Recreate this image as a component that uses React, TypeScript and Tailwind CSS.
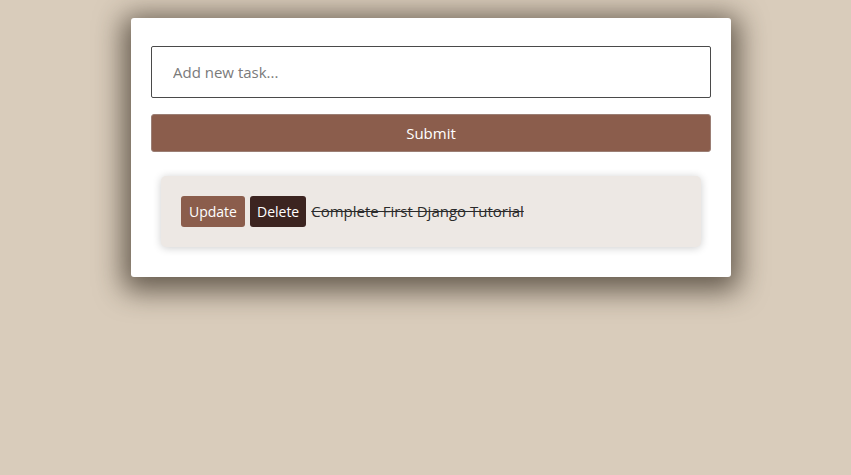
export default function App() {
  return (
    <div className="min-h-[475px] w-full bg-[#d9ccbb] pt-[18px] font-['Open_Sans',sans-serif]">
      <div className="ml-[131px] w-[600px] rounded-[3px] bg-white px-5 pb-[30px] pt-7 shadow-[0_6px_28px_8px_rgba(40,30,20,0.65)]">
        {/* Form */}
        <form className="flex flex-col gap-4" onSubmit={(e) => e.preventDefault()}>
          <input
            type="text"
            placeholder="Add new task..."
            className="h-[52px] w-full rounded-[2px] border border-[#4a4a4a] px-[21px] text-[15px] text-[#333] outline-none placeholder:text-[#7a7a7a]"
          />
          <button
            type="submit"
            className="h-[38px] w-full rounded-[3px] border border-[#9b7e74] bg-[#8b5d4c] text-[15px] text-white"
          >
            Submit
          </button>
        </form>

        {/* Tasks */}
        <div className="mt-6 px-[10px]">
          <div className="flex items-center rounded-[5px] bg-[#ede8e4] px-5 py-5 shadow-[0_1px_8px_rgba(0,0,0,0.2)]">
            <button className="mr-[5px] h-[31px] rounded-[3px] bg-[#8b5d4c] px-[8px] text-[14px] text-white">
              Update
            </button>
            <button className="mr-[5px] h-[31px] rounded-[3px] bg-[#3c2420] px-[7px] text-[14px] text-white">
              Delete
            </button>
            <span className="text-[15px] text-[#2b2b2b] line-through">Complete First Django Tutorial</span>
          </div>
        </div>
      </div>
    </div>
  )
}
